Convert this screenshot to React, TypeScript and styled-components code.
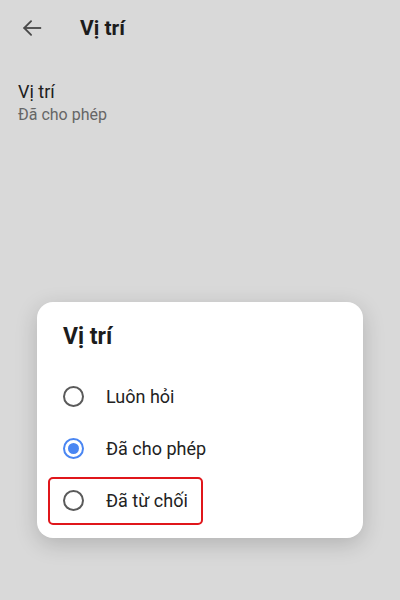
import React, { useState } from 'react';
import styled, { createGlobalStyle } from 'styled-components';

const GlobalStyle = createGlobalStyle`
  html, body {
    margin: 0;
    padding: 0;
    background: #d9d9d9;
    font-family: Roboto, "Noto Sans", "Liberation Sans", sans-serif;
  }
`;

const Screen = styled.div`
  position: relative;
  width: 400px;
  height: 600px;
  background: #d9d9d9;
  overflow: hidden;
`;

const TopBar = styled.div`
  display: flex;
  align-items: center;
  height: 56px;
  padding-left: 21px;
`;

const BackButton = styled.div`
  display: flex;
  width: 22px;
  height: 22px;
  color: #4a4a4a;
`;

const TopTitle = styled.h1`
  margin: 0 0 0 37px;
  font-size: 21px;
  font-weight: 700;
  color: #1c1c1c;
  line-height: 24px;
`;

const SettingItem = styled.div`
  display: flex;
  flex-direction: column;
  padding: 24px 18px;
`;

const SettingLabel = styled.span`
  font-size: 18px;
  line-height: 24px;
  color: #202020;
`;

const SettingValue = styled.span`
  font-size: 16px;
  line-height: 22px;
  color: #666;
`;

const Dialog = styled.div`
  position: absolute;
  left: 37px;
  top: 302px;
  width: 326px;
  height: 236px;
  box-sizing: border-box;
  background: #fff;
  border-radius: 16px;
  box-shadow: 0 6px 22px rgba(0, 0, 0, 0.18);
  padding: 23px 0 12px;
`;

const DialogTitle = styled.h2`
  margin: 0 0 21px 26px;
  font-size: 23px;
  font-weight: 700;
  line-height: 24px;
  color: #1c1c1c;
`;

const OptionList = styled.div`
  display: flex;
  flex-direction: column;
`;

const OptionRow = styled.div`
  position: relative;
  display: flex;
  align-items: center;
  height: 52px;
  padding-left: 26px;
  cursor: pointer;
`;

const Radio = styled.span<{ checked: boolean }>`
  box-sizing: border-box;
  display: flex;
  align-items: center;
  justify-content: center;
  width: 21px;
  height: 21px;
  border-radius: 50%;
  border: 2px solid ${(p) => (p.checked ? '#4a86f2' : '#5a5a5a')};

  &::after {
    content: '';
    display: ${(p) => (p.checked ? 'block' : 'none')};
    width: 11px;
    height: 11px;
    border-radius: 50%;
    background: #4a86f2;
  }
`;

const OptionText = styled.span`
  margin-left: 22px;
  font-size: 18px;
  color: #222;
`;

const Highlight = styled.div`
  position: absolute;
  left: 11px;
  top: 3px;
  width: 155px;
  height: 48px;
  box-sizing: border-box;
  border: 2.5px solid #e0161b;
  border-radius: 5px;
  pointer-events: none;
`;

const OPTIONS = ['Luôn hỏi', 'Đã cho phép', 'Đã từ chối'];

const App = () => {
  const [selected, setSelected] = useState<number>(1);

  return (
    <>
      <GlobalStyle />
      <Screen>
        <TopBar>
          <BackButton>
            <svg width="22" height="22" viewBox="0 0 24 24" fill="none" stroke="currentColor" strokeWidth="2" strokeLinecap="square">
              <path d="M21 12H4" />
              <path d="M11 4.5L3.5 12l7.5 7.5" strokeLinecap="round" />
            </svg>
          </BackButton>
          <TopTitle>Vị trí</TopTitle>
        </TopBar>
        <SettingItem>
          <SettingLabel>Vị trí</SettingLabel>
          <SettingValue>Đã cho phép</SettingValue>
        </SettingItem>
        <Dialog>
          <DialogTitle>Vị trí</DialogTitle>
          <OptionList>
            {OPTIONS.map((opt, i) => (
              <OptionRow key={opt} onClick={() => setSelected(i)}>
                <Radio checked={selected === i} />
                <OptionText>{opt}</OptionText>
                {i === 2 && <Highlight />}
              </OptionRow>
            ))}
          </OptionList>
        </Dialog>
      </Screen>
    </>
  );
};

export default App;
